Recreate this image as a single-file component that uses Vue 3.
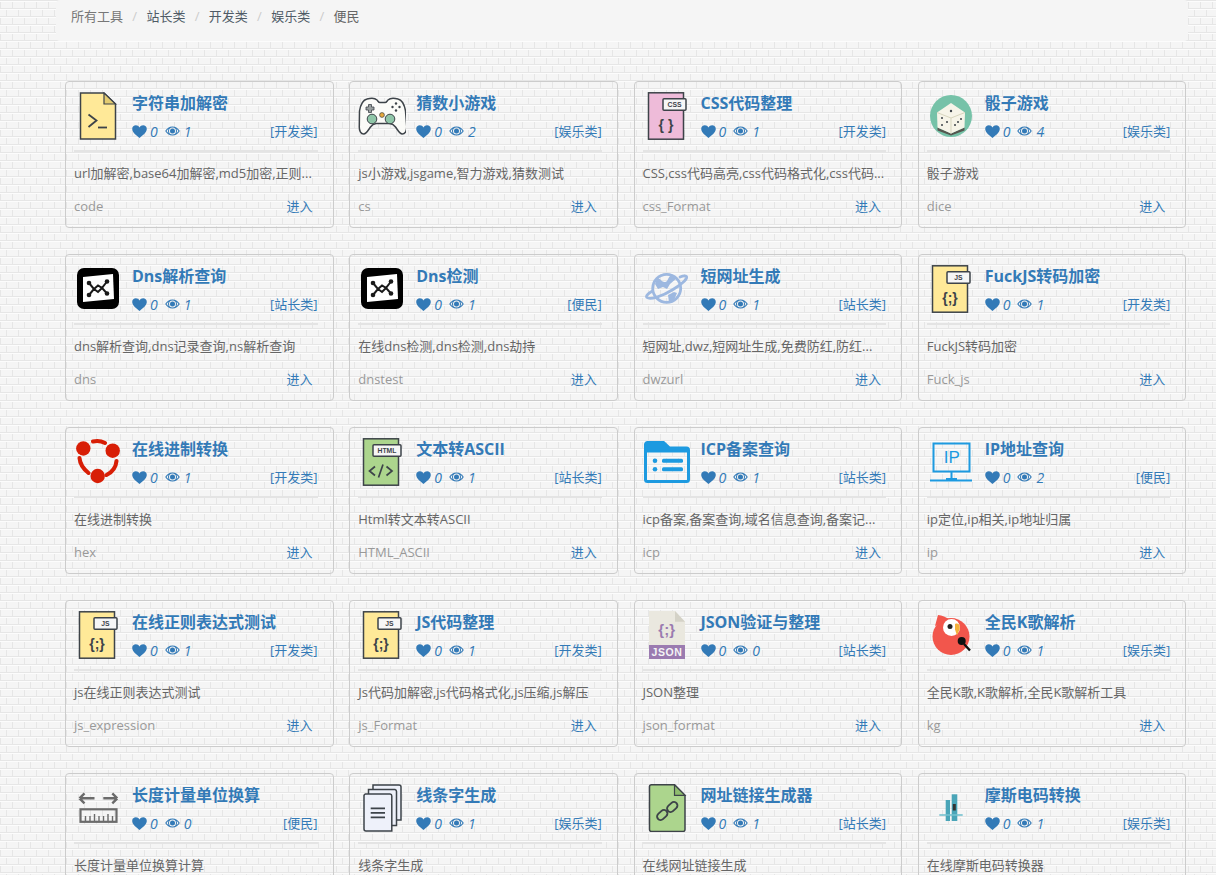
<template>
  <div class="page">
    <ol class="crumb">
      <li v-for="(c, i) in crumbs" :key="c" :class="{ first: i === 0, last: i === crumbs.length - 1 }">{{ c }}</li>
    </ol>

    <div class="grid">
      <div v-for="tool in tools" :key="tool.name" class="card">
        <div class="head">
          <svg class="logo" viewBox="0 0 48 48" width="48" height="48" v-html="icons[tool.icon]"></svg>
          <div class="info">
            <h4>{{ tool.name }}</h4>
            <div class="meta">
              <svg class="heart" viewBox="0 0 15 13" width="15" height="13"><path d="M7.5 13C5.400 11 .2 7.600.2 3.900.2 1.700 1.900.3 3.900.3c1.500 0 2.800.8 3.600 2.100C8.300 1.100 9.600.3 11.100.3c2 0 3.700 1.400 3.700 3.600 0 3.700-5.200 7.100-7.300 9.100z"/></svg>
              <i class="num">{{ tool.likes }}</i>
              <svg class="eye" viewBox="0 0 15 10" width="15" height="10"><path d="M7.500.4C4.300.4 1.700 2.400.2 5c1.500 2.600 4.100 4.600 7.300 4.600s5.800-2 7.300-4.600C13.300 2.400 10.700.4 7.500.4zm0 8.100A3.500 3.500 0 1 1 7.500 1.500a3.500 3.500 0 0 1 0 7zm0-6a2.500 2.500 0 1 0 0 5 2.500 2.500 0 0 0 0-5zM1.500 5c.6-.9 1.300-1.700 2.200-2.300C3.300 3.400 3 4.200 3 5s.3 1.600.7 2.300C2.800 6.700 2.100 5.900 1.500 5zm12 0c-.6.9-1.300 1.700-2.200 2.300.4-.7.7-1.500.7-2.300s-.3-1.600-.7-2.300c.9.600 1.600 1.400 2.200 2.300z"/></svg>
              <i class="num">{{ tool.views }}</i>
              <span class="cat">[{{ tool.cat }}]</span>
            </div>
          </div>
        </div>
        <hr />
        <p class="desc">{{ tool.desc }}</p>
        <div v-if="tool.code" class="foot">
          <span class="code">{{ tool.code }}</span>
          <a href="#" class="enter">进入</a>
        </div>
      </div>
    </div>
  </div>
</template>

<script setup>
const ink = '#3d4349'

// document with a small label tag on its right edge
const tagDoc = (fill, label, tagX, mark) => `
  <rect x="5.500" y="0.800" width="35" height="46.400" fill="${fill}" stroke="${ink}" stroke-width="1.500"/>
  <rect x="${tagX}" y="6.800" width="${43 - tagX}" height="11.400" rx="1" fill="#f6f6f6" stroke="${ink}" stroke-width="1.500"/>
  <text x="${(tagX + 43) / 2}" y="15" font-size="6.800" font-weight="700" text-anchor="middle" font-family="Liberation Sans" fill="${ink}">${label}</text>
  ${mark}`

const braces = (s) => `<text x="23" y="37.500" font-size="14" font-weight="700" text-anchor="middle" font-family="Liberation Sans" fill="${ink}">${s}</text>`

const dns = `
  <rect x="3" y="3" width="42" height="41" rx="7" fill="#000"/>
  <path d="M9 12l30-3 1 25-31 3z" fill="#fff"/>
  <path d="M15 18l5 6-5 6M33 16.500l-5 6.500 5 5.500M20 24l4-3.500 4 2.500-4 4z" stroke="#1a1a1a" stroke-width="2" fill="none"/>
  <g fill="#1a1a1a"><circle cx="15" cy="18" r="2.300"/><circle cx="33" cy="16.500" r="2.300"/><circle cx="15" cy="30" r="2.300"/><circle cx="33" cy="28.500" r="2.300"/></g>`

const jsDoc = tagDoc('#ffe998', 'JS', 20, braces('{;}'))

const icons = {
  code: `<path d="M6.500 1h23.500l11.500 11v35H6.500z" fill="#ffe998" stroke="${ink}" stroke-width="1.500"/>
    <path d="M30 1v11h11.500z" fill="#e3cb70" stroke="${ink}" stroke-width="1.200"/>
    <path d="M14.500 22.500l8 6-8 6.500" fill="none" stroke="${ink}" stroke-width="1.800"/><path d="M24 35.500h9" stroke="${ink}" stroke-width="1.800"/>`,
  game: `<path d="M1.500 19C2.500 13 5 8 9 7c4-1.200 8-1 10 1 1 1 1.500 2.500 3 2.500h5c1.500 0 2-1.500 3-2.500 2-2 6-2.200 10-1 4 1 6.500 6 7.500 12l1.200 15c.3 5-1.500 8-4.500 8-2.500 0-4.500-4-6.700-7-1.500-2-3-3-5.500-3.500H18c-2.500.5-4 1.500-5.500 3.500-2.200 3-4.200 7-6.700 7-3 0-4.800-3-4.500-8z" fill="#fbfbf8" stroke="${ink}" stroke-width="1.500"/>
    <path d="M10.500 12.500h3v2.500H16v3h-2.500v2.500h-3V18H8v-3h2.500z" fill="#9aa0a0" stroke="${ink}" stroke-width=".8"/>
    <g fill="${ink}"><circle cx="38" cy="11.500" r="1.200"/><circle cx="41.500" cy="15" r="1.200"/><circle cx="38" cy="18.500" r="1.200"/><circle cx="34.500" cy="15" r="1.200"/></g>
    <circle cx="24" cy="23" r="2.400" fill="#e8a93a" stroke="${ink}" stroke-width=".7"/>
    <circle cx="14" cy="27" r="4.800" fill="#8fc6a8" stroke="${ink}" stroke-width="1"/><circle cx="32" cy="27" r="4.800" fill="#8fc6a8" stroke="${ink}" stroke-width="1"/>`,
  css: tagDoc('#eebbd9', 'CSS', 20, braces('{ }')),
  dice: `<circle cx="24" cy="24" r="21" fill="#76c2a8"/>
    <path d="M24 41.500l13.500-6v3l-13.500 5-13.500-5v-3z" fill="#55564f"/>
    <path d="M24 11l14 9.500-.5 15L24 41.500l-13.500-6-.5-15z" fill="#f6f4e8"/>
    <path d="M10 20.500L24 26l14-5.500M24 26v15.500" stroke="#d7d5bd" stroke-width="1" fill="none"/>
    <g fill="${ink}"><circle cx="24" cy="19" r="1.200"/><circle cx="15" cy="26" r="1"/><circle cx="15" cy="33" r="1"/><circle cx="20" cy="30" r="1"/><circle cx="28" cy="33" r="1"/><circle cx="34" cy="27" r="1"/><circle cx="31" cy="30" r="1"/></g>`,
  dns,
  planet: `<circle cx="23.700" cy="23.300" r="14" fill="none" stroke="#9db8e0" stroke-width="2.800"/>
    <path d="M9.500 26C5 28.500 2.500 31 4 32.500c3 2.500 15-1 26-8 9-5.500 15-11 13.500-13-1-1-3.500-.8-6.500.5" fill="none" stroke="#9db8e0" stroke-width="2.800" stroke-linecap="round"/>
    <path d="M14 13c5 1 4 4 8 4 3 0 3-5 6-7l6 3-7 6-3 5-4-2-5 2-3-5zM25 30l6-3 3 1-3 7-5 2z" fill="#9db8e0"/>`,
  js: jsDoc,
  hex: `<path d="M19 3.500c4-1 8-.7 12 1.500M42.500 23c-.5 6-4 11-10 14M5.500 20c.5 6 4 11 9 15" fill="none" stroke="#d81e06" stroke-width="4" stroke-linecap="round"/>
    <circle cx="9.300" cy="10.500" r="7.200" fill="#d81e06"/><circle cx="38.700" cy="12.700" r="7.200" fill="#d81e06"/><circle cx="23.700" cy="38" r="7.200" fill="#d81e06"/>`,
  html: tagDoc('#acd58d', 'HTML', 15, `<path d="M17 29l-5.500 4.500L17 38M28.500 29l5.500 4.500-5.500 4.500M25 27l-4.500 13" fill="none" stroke="${ink}" stroke-width="1.700" transform="translate(0 -.5)"/>`),
  icp: `<path d="M2.500 6.500A2 2 0 0 1 4.500 4.500h16l6 5.500h17a2 2 0 0 1 2 2v29.500a2 2 0 0 1-2 2h-39a2 2 0 0 1-2-2z" fill="none" stroke="#1d9ae0" stroke-width="3"/>
    <path d="M2.500 6.500A2 2 0 0 1 4.500 4.500h16l6 5.500h17a2 2 0 0 1 2 2v2.500H2.500z" fill="#1d9ae0"/>
    <g fill="#1d9ae0"><circle cx="12" cy="22.700" r="2.300"/><circle cx="12" cy="31.300" r="2.300"/><rect x="19" y="20.700" width="21" height="4" rx="1.500"/><rect x="19" y="29.300" width="21" height="4" rx="1.500"/></g>`,
  ip: `<rect x="6.500" y="5.500" width="36" height="28" fill="none" stroke="#1d9ae0" stroke-width="2"/>
    <path d="M24.500 33.500v7M3 42.500h42" stroke="#1d9ae0" stroke-width="2"/><path d="M19 40h11v2.500H19z" fill="#1d9ae0"/>
    <text x="24.700" y="25" font-size="17" text-anchor="middle" font-family="Liberation Sans" fill="#1d9ae0">IP</text>`,
  json: `<path d="M6 0h26l10 10.700V34H6z" fill="#eae8df"/><path d="M32 0l10 10.700H32z" fill="#d4d2c7"/>
    <text x="23.700" y="23.500" font-size="15" font-weight="700" text-anchor="middle" font-family="Liberation Sans" fill="#9b7bb0">{;}</text>
    <rect x="6" y="34" width="36" height="14" fill="#9b7bb0"/>
    <text x="24" y="45" font-size="10.500" font-weight="700" text-anchor="middle" letter-spacing=".6" font-family="Liberation Sans" fill="#f4f4f4">JSON</text>`,
  kg: `<circle cx="24" cy="25.500" r="18.500" fill="#f2564c"/><path d="M8 15L11 4c4 .5 8 2 12 5z" fill="#f2564c"/>
    <circle cx="24.500" cy="16.500" r="8.500" fill="#fff"/><circle cx="23" cy="15.500" r="2.500" fill="#222"/>
    <path d="M28 13c4-2 5.500 2.500 4.500 5.500l-2.500 6-2-6z" fill="#f3b13c"/>
    <circle cx="34.700" cy="30" r="4" fill="#111"/><path d="M37 33l6 6.500" stroke="#111" stroke-width="2.400"/>`,
  ruler: `<path d="M5.500 14.300h15M5.500 14.300l5-5M5.500 14.300l5 5M43.300 14.300h-14M43.300 14.300l-5-5M43.300 14.300l-5 5" fill="none" stroke="#6b6b6b" stroke-width="2.400"/>
    <rect x="6.500" y="25.300" width="36" height="12.500" fill="none" stroke="#6b6b6b" stroke-width="2.200"/>
    <path d="M11.500 37v-5M16 37v-5M20.500 37v-7M25 37v-5M29.500 37v-5M34 37v-7M38.500 37v-5" stroke="#6b6b6b" stroke-width="1.400"/>`,
  pages: `<path d="M15 1h26a2 2 0 0 1 2 2v33H15z" fill="#eef1fa" stroke="${ink}" stroke-width="1.500"/>
    <path d="M10.500 5.500H37a2 2 0 0 1 1.500 2v34h-28z" fill="#eef1fa" stroke="${ink}" stroke-width="1.500"/>
    <path d="M7.500 10H32a2 2 0 0 1 1.800 2v35H8a2 2 0 0 1-2-2V11.500A2 2 0 0 1 7.500 10z" fill="#eef1fa" stroke="${ink}" stroke-width="1.500"/>
    <path d="M12.700 24.300H27M12.700 28.800H27M12.700 33.300H27" stroke="${ink}" stroke-width="1.800"/>`,
  link: `<path d="M8.500.8h23l10.500 10.500v34.200a2 2 0 0 1-2 2H8.500a2 2 0 0 1-2-2V2.800a2 2 0 0 1 2-2z" fill="#acd58d" stroke="${ink}" stroke-width="1.500"/>
    <path d="M31.500.8v10.500H42z" fill="#8fbd6e" stroke="${ink}" stroke-width="1.200"/>
    <g fill="none" stroke="${ink}" stroke-width="1.900"><rect x="13.500" y="27.500" width="11.500" height="7" rx="3.500" transform="rotate(-42 19.250 31)"/><rect x="23.500" y="19.500" width="11.500" height="7" rx="3.500" transform="rotate(-42 29.250 23)"/></g>`,
  morse: `<path d="M18.700 16H23v21h-4.300z" fill="#4aa5b8"/><path d="M24.700 10.300h5.600V37h-5.600z" fill="#4aa5b8"/>
    <path d="M12.300 31h23.400" stroke="#74c0cf" stroke-width="1.600"/><path d="M25.800 20h3v6.500h-3z" fill="#333"/>`
}

const crumbs = ['所有工具', '站长类', '开发类', '娱乐类', '便民']

const tools = [
  { name: '字符串加解密', icon: 'code', likes: 0, views: 1, cat: '开发类', desc: 'url加解密,base64加解密,md5加密,正则...', code: 'code' },
  { name: '猜数小游戏', icon: 'game', likes: 0, views: 2, cat: '娱乐类', desc: 'js小游戏,jsgame,智力游戏,猜数测试', code: 'cs' },
  { name: 'CSS代码整理', icon: 'css', likes: 0, views: 1, cat: '开发类', desc: 'CSS,css代码高亮,css代码格式化,css代码...', code: 'css_Format' },
  { name: '骰子游戏', icon: 'dice', likes: 0, views: 4, cat: '娱乐类', desc: '骰子游戏', code: 'dice' },
  { name: 'Dns解析查询', icon: 'dns', likes: 0, views: 1, cat: '站长类', desc: 'dns解析查询,dns记录查询,ns解析查询', code: 'dns' },
  { name: 'Dns检测', icon: 'dns', likes: 0, views: 1, cat: '便民', desc: '在线dns检测,dns检测,dns劫持', code: 'dnstest' },
  { name: '短网址生成', icon: 'planet', likes: 0, views: 1, cat: '站长类', desc: '短网址,dwz,短网址生成,免费防红,防红...', code: 'dwzurl' },
  { name: 'FuckJS转码加密', icon: 'js', likes: 0, views: 1, cat: '开发类', desc: 'FuckJS转码加密', code: 'Fuck_js' },
  { name: '在线进制转换', icon: 'hex', likes: 0, views: 1, cat: '开发类', desc: '在线进制转换', code: 'hex' },
  { name: '文本转ASCII', icon: 'html', likes: 0, views: 1, cat: '站长类', desc: 'Html转文本转ASCII', code: 'HTML_ASCII' },
  { name: 'ICP备案查询', icon: 'icp', likes: 0, views: 1, cat: '站长类', desc: 'icp备案,备案查询,域名信息查询,备案记...', code: 'icp' },
  { name: 'IP地址查询', icon: 'ip', likes: 0, views: 2, cat: '便民', desc: 'ip定位,ip相关,ip地址归属', code: 'ip' },
  { name: '在线正则表达式测试', icon: 'js', likes: 0, views: 1, cat: '开发类', desc: 'js在线正则表达式测试', code: 'js_expression' },
  { name: 'JS代码整理', icon: 'js', likes: 0, views: 1, cat: '开发类', desc: 'Js代码加解密,js代码格式化,js压缩,js解压', code: 'js_Format' },
  { name: 'JSON验证与整理', icon: 'json', likes: 0, views: 0, cat: '站长类', desc: 'JSON整理', code: 'json_format' },
  { name: '全民K歌解析', icon: 'kg', likes: 0, views: 1, cat: '娱乐类', desc: '全民K歌,K歌解析,全民K歌解析工具', code: 'kg' },
  { name: '长度计量单位换算', icon: 'ruler', likes: 0, views: 0, cat: '便民', desc: '长度计量单位换算计算' },
  { name: '线条字生成', icon: 'pages', likes: 0, views: 1, cat: '娱乐类', desc: '线条字生成' },
  { name: '网址链接生成器', icon: 'link', likes: 0, views: 1, cat: '站长类', desc: '在线网址链接生成' },
  { name: '摩斯电码转换', icon: 'morse', likes: 0, views: 1, cat: '娱乐类', desc: '在线摩斯电码转换器' }
]
</script>

<style>
html, body {
  margin: 0;
  height: 875px;
  overflow: hidden;
}
/* brick wall: each conic layer paints one short joint, the two rows are offset by half a brick */
body {
  background-color: #f5f5f5;
  background-image:
    linear-gradient(#e6e6e6 1px, #fcfcfc 1px, #fcfcfc 2px, transparent 2px),
    conic-gradient(at 1px 8px, transparent 270deg, #e6e6e6 270deg),
    conic-gradient(at 1px 8px, transparent 270deg, #e6e6e6 270deg);
  background-size: 100% 8px, 12px 16px, 12px 16px;
  background-position: 0 0, 0 0, 6px 8px;
}
</style>

<style scoped>
.page {
  width: 1216px;
  box-sizing: border-box;
  padding: 0 28px 0 56px;
  font-family: "Open Sans", "Noto Sans CJK SC", sans-serif;
  font-size: 13px;
  color: #666;
}
.crumb {
  list-style: none;
  display: flex;
  margin: 0 0 40px;
  height: 41px;
  box-sizing: border-box;
  padding: 7px 15px;
  line-height: 18px;
  background: #f5f5f5;
  border-radius: 4px;
}
.crumb li {
  color: #4f5b66;
}
.crumb li.first {
  color: #777;
}
.crumb li.last {
  color: #666;
}
.crumb li + li::before {
  content: "/";
  color: #ccc;
  padding: 0 9.3px;
}
.grid {
  display: grid;
  grid-template-columns: repeat(4, 268.5px);
  column-gap: 15.75px;
  row-gap: 26px;
  margin-left: 9px;
}
.card {
  box-sizing: border-box;
  height: 147px;
  border: 1px solid #ccc;
  border-radius: 4px;
  padding: 10px 15px 0 8px;
}
.head {
  display: flex;
  height: 58px;
}
.logo {
  flex: none;
  margin-right: 10px;
}
.info {
  flex: 1;
  min-width: 0;
  margin-top: -1px;
}
h4 {
  margin: 0;
  font-size: 16px;
  line-height: 24px;
  color: #337ab7;
  font-weight: 700;
  white-space: nowrap;
}
.meta {
  display: flex;
  align-items: center;
  margin-top: 7px;
  height: 18px;
  color: #337ab7;
}
.heart, .eye {
  fill: #337ab7;
}
.num {
  font-style: italic;
  font-size: 14px;
  margin: 0 7px 0 3px;
}
.eye + .num {
  margin-left: 4px;
}
.cat {
  margin-left: auto;
  margin-top: -2px;
}
hr {
  border: 0;
  height: 2px;
  background: #e4e4e4;
  margin: 0;
}
.desc {
  margin: 12px 0 0;
  line-height: 18px;
  white-space: nowrap;
}
.foot {
  display: flex;
  justify-content: space-between;
  margin-top: 15px;
  line-height: 18px;
  padding-right: 5px;
}
.code {
  color: #999;
}
.enter {
  color: #337ab7;
  text-decoration: none;
}
</style>
